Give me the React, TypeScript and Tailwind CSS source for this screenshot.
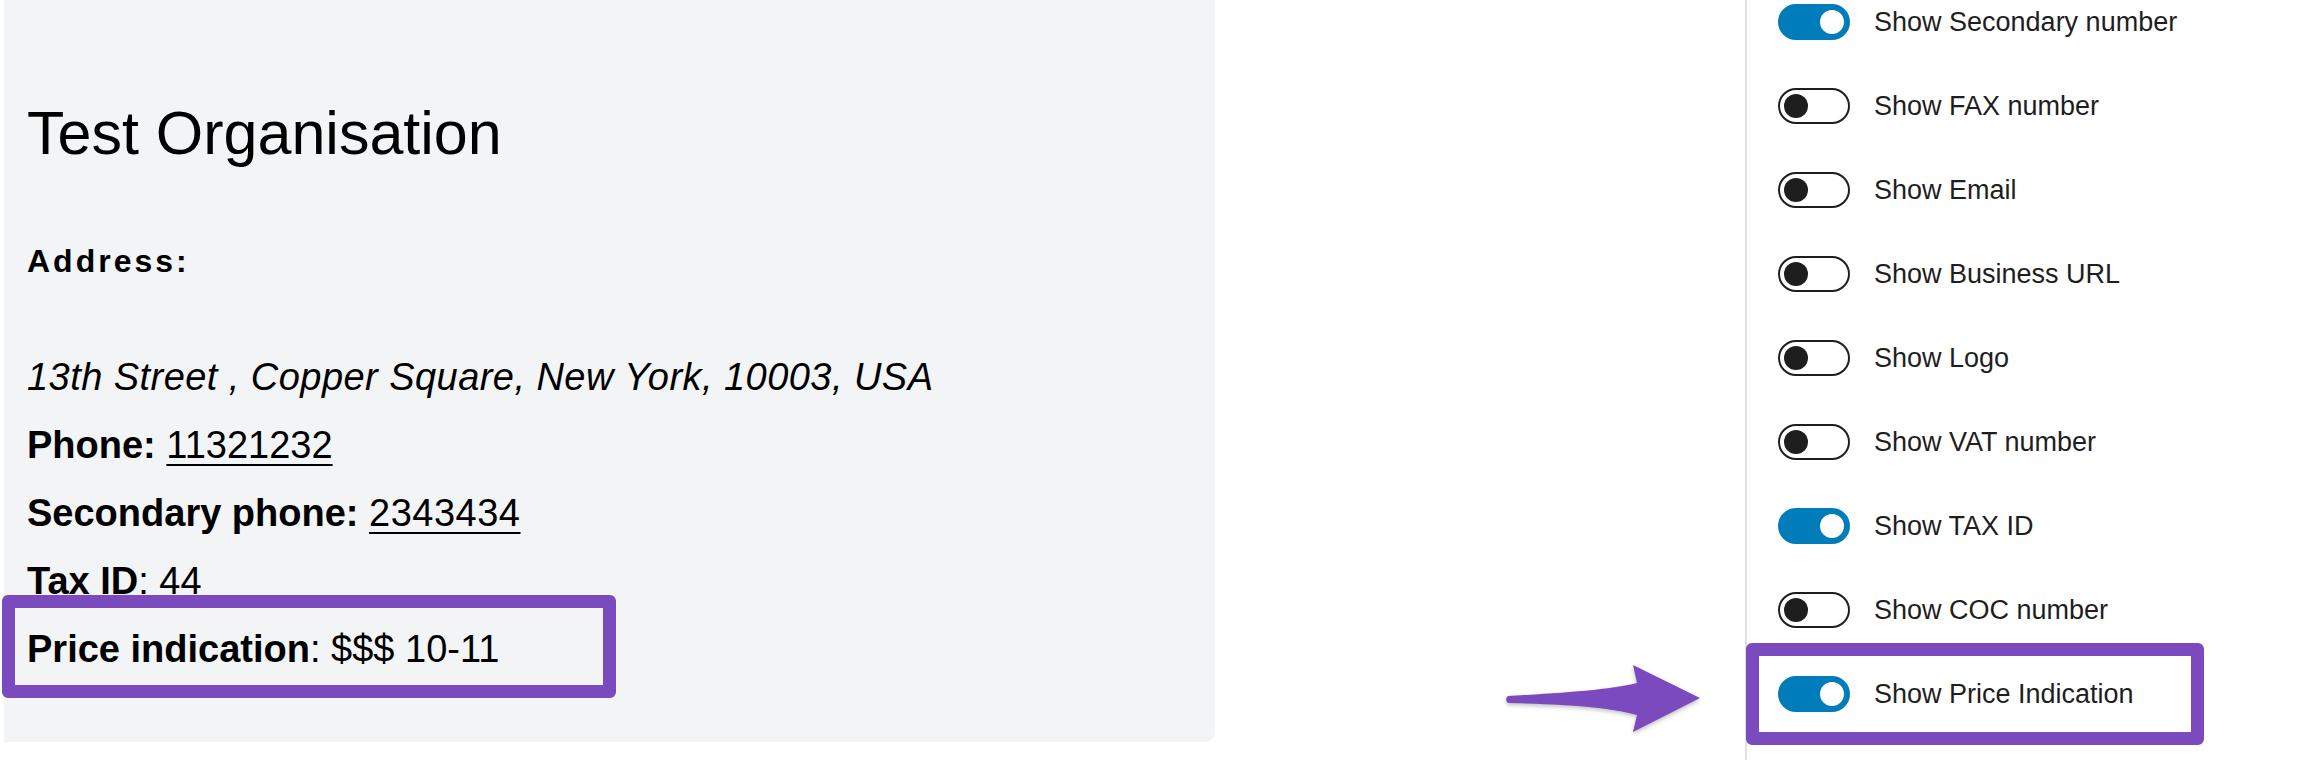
import React from "react";

type ToggleItem = { label: string; on: boolean };

const toggles: ToggleItem[] = [
  { label: "Show Secondary number", on: true },
  { label: "Show FAX number", on: false },
  { label: "Show Email", on: false },
  { label: "Show Business URL", on: false },
  { label: "Show Logo", on: false },
  { label: "Show VAT number", on: false },
  { label: "Show TAX ID", on: true },
  { label: "Show COC number", on: false },
  { label: "Show Price Indication", on: true },
];

const Toggle = ({ on }: { on: boolean }) => (
  <span
    className={
      on
        ? "flex items-center justify-end w-[72px] h-[36px] rounded-full border-2 border-[#007cba] bg-[#007cba] px-[4px] shrink-0"
        : "flex items-center justify-start w-[72px] h-[36px] rounded-full border-2 border-[#1e1e1e] bg-white px-[4px] shrink-0"
    }
  >
    <span
      className={
        on
          ? "block w-[24px] h-[24px] rounded-full bg-white"
          : "block w-[24px] h-[24px] rounded-full bg-[#1e1e1e]"
      }
    />
  </span>
);

const Arrow = () => (
  <svg
    width="220"
    height="100"
    viewBox="0 0 220 100"
    className="drop-shadow-[0_2px_2px_rgba(0,0,0,0.25)]"
  >
    <path
      d="M 8 46 C 60 43, 110 40, 137 33 L 133 15 L 200 48 L 133 82 L 137 65 C 110 57, 60 54, 8 53 Q 4 49.5 8 46 Z"
      fill="#7b4abf"
    />
  </svg>
);

export default function App() {
  return (
    <div className="relative w-[2318px] h-[760px] bg-white flex font-['Liberation_Sans',Arial,sans-serif] text-black overflow-hidden">
      {/* Organisation preview */}
      <div className="ml-[4px] w-[1211px] h-[742px] shrink-0 bg-[#f3f4f6] rounded-br-[10px] pl-[23px] pt-[103px]">
        <h1 className="text-[61px] leading-[60px] font-normal">Test Organisation</h1>
        <div className="mt-[78px] text-[32px] leading-[40px] font-bold tracking-[3px]">
          Address:
        </div>
        <div className="mt-[62px] text-[38px] leading-[68px]">
          <div className="italic tracking-[0.45px]">
            13th Street , Copper Square, New York, 10003, USA
          </div>
          <div>
            <b>Phone:</b>{" "}
            <span className="underline decoration-2 underline-offset-[6px]">11321232</span>
          </div>
          <div>
            <b>Secondary phone:</b>{" "}
            <span className="underline decoration-2 underline-offset-[6px] tracking-[0.5px]">
              2343434
            </span>
          </div>
          <div>
            <b>Tax ID</b>: 44
          </div>
          <div>
            <b>Price indication</b>: $$$ 10-11
          </div>
        </div>
      </div>

      {/* gap between panels */}
      <div className="w-[530px] shrink-0" />

      {/* Settings column */}
      <div className="flex-1 border-l-2 border-[#e0e0e0] pl-[31px] pt-[4px] flex flex-col gap-[48px]">
        {toggles.map((t) => (
          <div key={t.label} className="flex items-center gap-[24px] h-[36px]">
            <Toggle on={t.on} />
            <span className="text-[27px] text-[#1e1e1e]">{t.label}</span>
          </div>
        ))}
      </div>

      {/* annotations */}
      <div className="absolute left-[2px] top-[595px] w-[614px] h-[103px] border-[13px] border-[#7b4abf] rounded-[6px]" />
      <div className="absolute left-[1746px] top-[643px] w-[458px] h-[102px] border-[13px] border-[#7b4abf] rounded-[6px]" />
      <div className="absolute left-[1500px] top-[650px]">
        <Arrow />
      </div>
    </div>
  );
}
